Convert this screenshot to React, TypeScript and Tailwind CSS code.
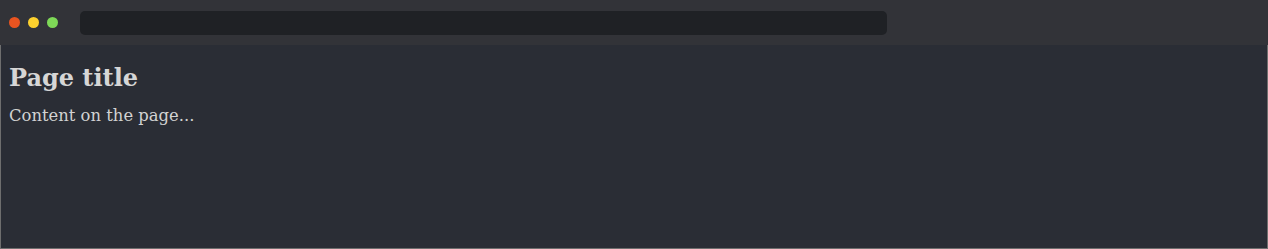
export default function App() {
  return (
    <div className="flex h-[249px] w-[1268px] flex-col bg-[#2a2d35]">
      {/* Browser chrome */}
      <div className="flex h-[45px] items-center bg-[#323338] pl-[9px]">
        <div className="flex items-center gap-[8px]">
          <span className="h-[11px] w-[11px] rounded-full bg-[#e95420]" />
          <span className="h-[11px] w-[11px] rounded-full bg-[#fdd12e]" />
          <span className="h-[11px] w-[11px] rounded-full bg-[#7ed957]" />
        </div>
        <div className="ml-[22px] h-[24px] w-[807px] rounded-[5px] bg-[#1f2125]" />
      </div>

      {/* Page */}
      <div className="flex-1 border-x border-b border-[#6e6e6e] pl-[8px] pt-[19px] font-['DejaVu_Serif',serif]">
        <h1 className="text-[24px] font-bold leading-[28px] text-[#d6d6d6]">Page title</h1>
        <p className="mt-[14px] text-[16.4px] leading-[20px] text-[#d2d2d2]">Content on the page...</p>
      </div>
    </div>
  )
}
